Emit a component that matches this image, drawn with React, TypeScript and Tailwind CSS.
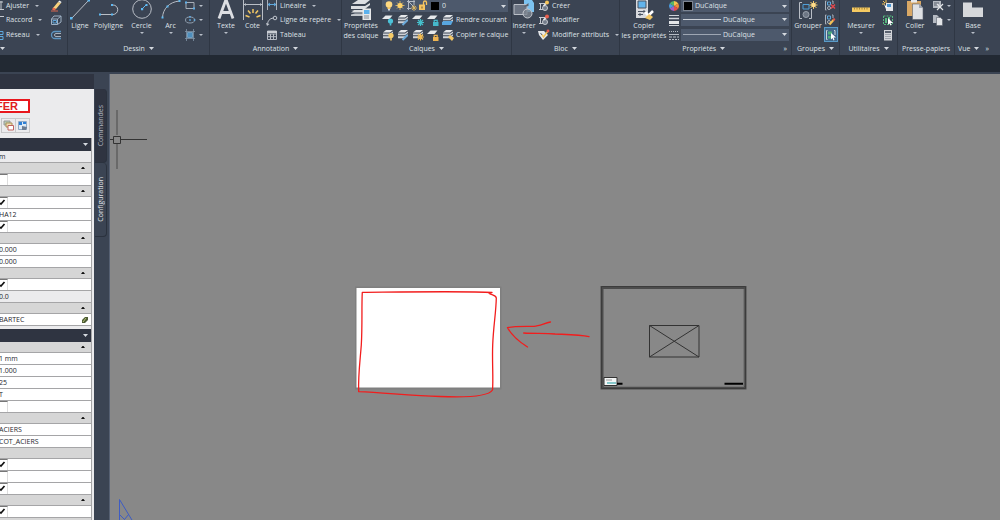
import type { ReactNode } from 'react';
import clsx from 'clsx';

type IconProps = { children: ReactNode; w?: number; h?: number };

function Icon({ children, w = 12, h = 12 }: IconProps) {
  return (
    <svg width={w} height={h} viewBox={`0 0 ${w} ${h}`} fill="none" className="shrink-0" aria-hidden="true">
      {children}
    </svg>
  );
}

function Caret({ big = false }: { big?: boolean }) {
  return big ? (
    <Icon w={5} h={3}>
      <path d="M0 0h5L2.500 3z" fill="#d5d9df" />
    </Icon>
  ) : (
    <Icon w={4} h={2}>
      <path d="M0 0h4L2 2z" fill="#b9bfc9" />
    </Icon>
  );
}

/* ---------- layer icons ---------- */

function Sheets() {
  return (
    <>
      <path d="M1 3.500L4 1h7L8 3.500z" fill="#e6e8eb" />
      <path d="M1 4.500h7l3-2v1.500L8 6.200H1zM1 7.200h7l3-2v1.500L8 9.200H1z" fill="#cfd2d7" />
    </>
  );
}

function LayerOne({ color }: { color: string }) {
  return (
    <Icon>
      <path d="M0 5l3.500-3.500h7L7.500 5z" fill="#e6e8eb" />
      <circle cx="8.500" cy="7" r="2.600" fill={color} />
      <path d="M7.700 9.200h1.600V11.500H7.700z" fill={color} />
    </Icon>
  );
}

function LayerFreeze() {
  return (
    <Icon>
      <path d="M0 5l3.500-3.500h7L7.500 5z" fill="#e6e8eb" />
      <path d="M8.500 5v7M5 8.500h7M6 6l5 5M11 6l-5 5" stroke="#45c0cc" strokeWidth="1.200" />
    </Icon>
  );
}

function LayerLock({ color }: { color: string }) {
  return (
    <Icon>
      <path d="M0 5l3.500-3.500h7L7.500 5z" fill="#e6e8eb" />
      <path d="M6 8h5.500v4H6z" fill={color} />
      <path d="M7.200 8V6.300h3V8" stroke={color} strokeWidth="1.200" />
    </Icon>
  );
}

function LayerStack({ color, shape }: { color: string; shape: 'bulb' | 'sun' | 'pen' }) {
  return (
    <Icon>
      <Sheets />
      {shape === 'bulb' && (
        <>
          <circle cx="9" cy="6.500" r="2.600" fill={color} />
          <path d="M8.200 8.500h1.600V11.500H8.200z" fill={color} />
        </>
      )}
      {shape === 'sun' && (
        <path d="M8.500 4.500v7M5 8h7M6 5.500l5 5M11 5.500l-5 5" stroke={color} strokeWidth="1.100" />
      )}
      {shape === 'pen' && <path d="M5.500 11l5-5" stroke={color} strokeWidth="2" />}
    </Icon>
  );
}

function Bulb() {
  return (
    <Icon w={10}>
      <circle cx="5" cy="4.500" r="3.300" fill="#ffd980" />
      <path d="M3.500 7h3v2h-3z" fill="#f2c766" />
      <path d="M4 9h2v1.500H4z" fill="#d6d9de" />
    </Icon>
  );
}

function Sun() {
  return (
    <Icon w={10}>
      <path d="M5 1v9M.5 5.500h9M2 2.500l6 6M8 2.500l-6 6" stroke="#f0c566" strokeWidth=".8" />
      <circle cx="5" cy="5.500" r="2.600" fill="#ffd36b" />
    </Icon>
  );
}

function ViewportFreeze() {
  return (
    <Icon w={11}>
      <path d="M1 1.500h8M2.500 0v10M1 8.500h4M8 0v5M3 2l5 5" stroke="#b5bac3" />
      <path d="M8 5v6M5 8h6M6 6l4 4M10 6l-4 4" stroke="#e9bd5f" strokeWidth=".8" />
    </Icon>
  );
}

function OpenLock() {
  return (
    <Icon w={10}>
      <path d="M1 4.500h6V10H1z" fill="#f6c560" />
      <path d="M5.500 5V2.500a1.500 1.500 0 0 1 3 0V5" stroke="#f6c560" strokeWidth="1.300" />
      <path d="M3.500 6.500h1v2h-1z" fill="#6b5a33" />
    </Icon>
  );
}

/* ---------- small tool icons ---------- */

const Eraser = () => (
  <Icon>
    <path d="M3 8l5-6 3 1-5 6z" fill="#f8d27c" />
    <path d="M8 2l1.500-1.500L11.500 2 11 3z" fill="#f4f4f4" />
    <path d="M3 7.500L6 9l-1.500 1.500L2 9.500z" fill="#f0694a" />
    <path d="M1 11h7" stroke="#d9664e" />
  </Icon>
);

const Cube = () => (
  <Icon>
    <path d="M1.500 5v5.500h6V5zM1.500 5l2.500-3h7L7.500 5M11 2v6l-3.500 2.500" stroke="#9fb1c4" />
    <path d="M3 6.500h3.500V9H3z" stroke="#5ea3d6" />
  </Icon>
);

const Offset = () => (
  <Icon>
    <path d="M11 2.500H5a3.500 3.500 0 0 0 0 7h6" stroke="#5c94c0" strokeWidth="1.300" />
    <path d="M11 4.500H6a1.500 1.500 0 0 0 0 3h5" stroke="#aab1bb" />
  </Icon>
);

const Rectangle = () => (
  <Icon>
    <path d="M2 2.500h8v6H2z" stroke="#a7aeb8" />
    <path d="M1 1.500h2v2H1zM9 7.500h2v2H9z" fill="#5fb0ea" />
  </Icon>
);

const Ellipse = () => (
  <Icon>
    <ellipse cx="6" cy="6" rx="4.500" ry="3" stroke="#8e9cac" />
    <path d="M5.200 5.200h1.600v1.600H5.200zM5.200 2h1.600v1.600H5.200zM9.800 5.200h1.600v1.600H9.800z" fill="#5fb0ea" />
  </Icon>
);

const Hatch = () => (
  <Icon>
    <path d="M2.500 0v12M9.500 0v12M1 2.500h10M1 9.500h10" stroke="#8294a7" strokeWidth=".8" />
    <path d="M3.500 3.500h5v5h-5z" fill="#4f8fbd" stroke="#8fc3e8" strokeWidth=".6" />
  </Icon>
);

const Linear = () => (
  <Icon>
    <path d="M1.500 0v10M10.500 0v10" stroke="#aab1bb" />
    <path d="M2 4.500h8M4 3L2 4.500 4 6M8 3l2 1.500L8 6" stroke="#5fa8dd" />
  </Icon>
);

const Leader = () => (
  <Icon>
    <path d="M1.500 11c0-4 2-6.500 6-7" stroke="#c1c6ce" />
    <circle cx="9" cy="4" r="1.800" stroke="#c1c6ce" />
    <path d="M0 9l1 3 2.500-2z" fill="#c1c6ce" />
  </Icon>
);

const TableIcon = () => (
  <Icon>
    <path d="M1.500 2h9v8.500h-9zM1.500 5h9M4.500 5v5.500M7.500 5v5.500M1.500 7.700h9" stroke="#b6bbc4" />
    <path d="M1 2h10v2H1z" fill="#c9cdd3" />
  </Icon>
);

const BlockEdit = ({ tip }: { tip: string }) => (
  <Icon>
    <path d="M1 3.500h6M2.500 3v6M1 9.500h4" stroke="#c5c9d0" />
    <circle cx="7" cy="8" r="2.500" fill="#747d8b" stroke="#c5c9d0" />
    <path d="M5.500 6L9 2.500" stroke="#e8e8e8" strokeWidth="1.600" />
    <circle cx="9" cy="2.500" r="2" fill={tip} />
  </Icon>
);

const AttrEdit = () => (
  <Icon>
    <path d="M0 2h6l4 4-5 5-4-5z" fill="#e4e6e9" />
    <path d="M4 5.500l1.500 2.500L10 2" stroke="#f3c154" strokeWidth="1.400" />
    <circle cx="10" cy="2" r="1.400" fill="#e5584c" />
    <path d="M2.500 4l1.500 2" stroke="#59606c" />
  </Icon>
);

const ColorWheel = () => (
  <Icon>
    <path d="M6 6V1a5 5 0 0 1 4.300 2.500z" fill="#f3c44f" />
    <path d="M6 6l4.300-2.500a5 5 0 0 1 0 5z" fill="#ef8b3a" />
    <path d="M6 6l4.300 2.500A5 5 0 0 1 6 11z" fill="#e2504d" />
    <path d="M6 6v5a5 5 0 0 1-4.300-2.500z" fill="#a25fc4" />
    <path d="M6 6L1.700 8.500a5 5 0 0 1 0-5z" fill="#4a9be0" />
    <path d="M6 6L1.700 3.500A5 5 0 0 1 6 1z" fill="#57b568" />
  </Icon>
);

const LineWeights = () => (
  <Icon>
    <path d="M1 1.500h10" stroke="#cfd3d9" />
    <path d="M1 4.500h10" stroke="#cfd3d9" strokeWidth="1.500" />
    <path d="M1 8.500h10" stroke="#e3e5e8" strokeWidth="3" />
    <path d="M1 11.500h10" stroke="#cfd3d9" />
  </Icon>
);

const LineTypes = () => (
  <Icon>
    <path d="M1 2.500h10" stroke="#b7bcc5" strokeDasharray="1 1" />
    <path d="M1 5.500h10" stroke="#b7bcc5" />
    <path d="M1 8h10" stroke="#b7bcc5" strokeDasharray="3 1" />
    <path d="M1 10.500h10" stroke="#b7bcc5" strokeDasharray="2 1" />
  </Icon>
);

const Ungroup = () => (
  <Icon>
    <path d="M2.500 1h-1v9h1M8 1h1v3" stroke="#aab1bb" />
    <path d="M3.500 2h3v3h-3z" stroke="#5fa8dd" />
    <circle cx="5" cy="8" r="1.500" stroke="#aab1bb" />
    <path d="M7 4.500l4 4M11 4.500l-4 4" stroke="#e5484d" strokeWidth="1.400" />
  </Icon>
);

const GroupEdit = () => (
  <Icon>
    <path d="M2.500 1h-1v9h1M8 1h1v3" stroke="#aab1bb" />
    <path d="M3.500 2h3v3h-3z" stroke="#5fa8dd" />
    <circle cx="5" cy="8" r="1.500" stroke="#aab1bb" />
    <path d="M5.500 10.500l4-4.500" stroke="#f3c154" strokeWidth="2" />
    <circle cx="10" cy="5.500" r="1.200" fill="#e5584c" />
  </Icon>
);

const GroupSelect = () => (
  <Icon>
    <path d="M2.500 1.500h-1v9h1M9 1.500h1V6" stroke="#cdd3db" />
    <path d="M3 2.500h4v3H3zM3 7h3v2.500H3z" fill="#4fae7c" />
    <path d="M6 4l5 4.500H8.500l1 2.500-1 .5-1-2.500L6 10.500z" fill="#fff" />
  </Icon>
);

const QuickSelect = () => (
  <Icon>
    <path d="M4 3h7v8H4z" fill="#e3e5e8" />
    <path d="M5 4h4v3H5z" fill="#4a94d0" />
    <path d="M1 1l2 2M4 0v3M0 4h3" stroke="#f3c154" />
    <path d="M2 4l4 4H4l.5 2.500z" fill="#fff" />
  </Icon>
);

const SelectAll = () => (
  <Icon>
    <path d="M1.500 2h9v8.500h-9z" stroke="#58b980" strokeDasharray="2 1" />
    <path d="M3 4h2v5H3zM6 3h2v3H6z" fill="#58b980" />
    <path d="M6 4l5 5H8.500l1 2-1 .5-1-2L6 10.500z" fill="#fff" />
  </Icon>
);

const Calculator = () => (
  <Icon>
    <path d="M2 1h8v10.500H2z" fill="#d3d5d9" />
    <path d="M3 2h6v2H3z" fill="#5b6370" />
    <path d="M3.500 5.500h5M3.500 7.500h5M3.500 9.500h5" stroke="#6b7280" strokeDasharray="1 1" />
  </Icon>
);

const Cut = () => (
  <Icon>
    <path d="M1 1h8v7H1z" fill="#b5bac2" />
    <path d="M2 3h5M2 5h4" stroke="#59606c" />
    <path d="M5 4l6 6M11 4l-6 6" stroke="#e3e5e8" strokeWidth="1.200" />
  </Icon>
);

const Copy = () => (
  <Icon>
    <path d="M1 1h4l2 2v6H1z" fill="#b5bac2" />
    <path d="M4.500 3.500h4l2 2v6h-6z" fill="#e3e5e8" stroke="#59606c" strokeWidth=".6" />
  </Icon>
);

/* ---------- large tool icons ---------- */

const LineIcon = () => (
  <Icon w={20} h={20}>
    <path d="M1.500 18.500L18.500.5" stroke="#b9bec6" />
    <path d="M0 17h2.500v2.500H0zM17.500 0H20v1.500h-2.500z" fill="#5fb9f2" />
  </Icon>
);

const PolylineIcon = () => (
  <Icon w={20} h={20}>
    <path d="M1 14.500h13a4.500 4.500 0 0 0 0-9.500h-2" stroke="#b9bec6" />
    <path d="M0 13.500h2v2H0zM12 13.500h2v2h-2zM12 4h2v2h-2z" fill="#5fb9f2" />
  </Icon>
);

const CircleIcon = () => (
  <Icon w={20} h={20}>
    <circle cx="10" cy="9" r="9.300" stroke="#b9bec6" />
    <path d="M10 9l4-4" stroke="#5fb9f2" />
    <path d="M9 8h2.200v2.200H9zM13.500 4h2v2h-2z" fill="#5fb9f2" />
  </Icon>
);

const ArcIcon = () => (
  <Icon w={20} h={20}>
    <path d="M1.500 17.500C2 9 8 2 18.500 1" stroke="#b9bec6" />
    <path d="M.5 16.500h2v2h-2zM5.500 5.500h2v2h-2zM17.500 0h2v2h-2z" fill="#5fb9f2" />
  </Icon>
);

const TextIcon = () => (
  <Icon w={18} h={20}>
    <path d="M2 18.500L8.300 1.500h1.400L16 18.500M4.500 12.500h9" stroke="#dcdee2" strokeWidth="2.800" />
  </Icon>
);

const DimIcon = () => (
  <Icon w={20} h={20}>
    <path d="M.5 0v20M19.500 0v20M1 4.500h18" stroke="#b9bec6" />
    <path d="M1 4.500L3 3v3zM19 4.500L17 3v3z" fill="#b9bec6" />
    <path d="M10 9v4M5 10.500l2.500 3M15 10.500l-2.500 3M2.500 15.500l4 1.500M17.500 15.500l-4 1.500" stroke="#f3c864" strokeWidth="1.500" />
  </Icon>
);

const LayerPropsIcon = () => (
  <Icon w={22} h={20}>
    <path d="M2 4l6-4h12l-5 4zM1 6h14l5-3v2l-5 4H1zM1 10h12v2.500H1l3-2z" fill="#dcdee2" />
    <path d="M1 14.500l4-1h8v2.500H1z" fill="#c3c7cd" />
    <path d="M12.500 8.500H21V20h-8.500z" fill="#e6e8ea" />
    <path d="M14 10h5.500v4H14z" fill="#5bb1ee" />
    <path d="M14 16h5M14 18h5" stroke="#858c97" />
  </Icon>
);

const InsertIcon = () => (
  <Icon w={22} h={20}>
    <path d="M11 0h8l2 3v9H11z" fill="#7cc3f1" />
    <path d="M1 4.500h13v10H1z" fill="#6d7583" stroke="#b9bec6" />
    <circle cx="14.500" cy="13.500" r="4.500" fill="#7c8490" fillOpacity=".8" stroke="#c5c9d0" />
    <path d="M10.500 7l5-4v3" fill="#59606c" />
  </Icon>
);

const MatchIcon = () => (
  <Icon w={20} h={20}>
    <path d="M2 0h12v18H2z" fill="#d8dade" />
    <path d="M4 1h8v7H4z" fill="#62b4ec" stroke="#4b5462" />
    <path d="M4 11.500h8M4 14.500h5M10 10v3M6 13v3" stroke="#4b5462" />
    <path d="M11 12l4 4M19 11l-4 4" stroke="#fff" strokeWidth="2.500" />
    <path d="M11 18l4-4 4 3-3 3z" fill="#f2c766" />
  </Icon>
);

const GroupIcon = () => (
  <Icon w={20} h={20}>
    <path d="M4 2.500H1.500v16H4M11 18.500h2.500V9" stroke="#b9bec6" />
    <path d="M5 4.500h6v4.500H5z" stroke="#4f9fd8" />
    <circle cx="8" cy="14.500" r="3" fill="#6d7684" stroke="#9aa1ac" />
    <path d="M15.500 1v8M11.500 5h8M12.500 2l6 6M18.500 2l-6 6" stroke="#f3c864" />
    <circle cx="15.500" cy="5" r="2.300" fill="#ffdc8a" />
  </Icon>
);

const RulerIcon = () => (
  <Icon w={20} h={20}>
    <path d="M1 7.500h18v4.500H1z" fill="#f5ca62" />
    <path d="M3.500 7.500v2M6 7.500v2M8.500 7.500v2M11 7.500v2M13.500 7.500v2M16 7.500v2" stroke="#8a6f2c" strokeWidth=".7" />
  </Icon>
);

const PasteIcon = () => (
  <Icon w={18} h={20}>
    <path d="M1 1h14v15H1z" fill="#d9a865" />
    <path d="M5 0h6v2.500H5z" fill="#e6e8ea" />
    <path d="M6.500 4h7l3.500 4v11.500H6.500z" fill="#dfe1e4" stroke="#59606c" strokeWidth=".6" />
    <path d="M13 4v4h4z" fill="#9fa5af" />
  </Icon>
);

const BaseIcon = () => (
  <Icon w={22} h={20}>
    <path d="M1 2.500h9V7.500h11V17H1z" fill="#d6d8db" />
  </Icon>
);

/* ---------- ribbon pieces ---------- */

type PanelProps = { title?: string; width: string; children: ReactNode; caret?: boolean; more?: boolean };

function Panel({ title, width, children, caret = true, more = false }: PanelProps) {
  return (
    <section className={clsx('flex flex-col border-r border-[#2f3744]', width)}>
      <div className="flex h-[42px]">{children}</div>
      <div className="flex h-[13px] items-center px-1">
        <button className="mx-auto flex items-center gap-1 whitespace-nowrap">
          {title}
          {caret && <Caret big />}
        </button>
        {more && <button aria-label="Plus">»</button>}
      </div>
    </section>
  );
}

type BigButtonProps = { icon: ReactNode; label: string; second?: string; width: string; caret?: boolean };

function BigButton({ icon, label, second, width, caret = false }: BigButtonProps) {
  return (
    <button className={clsx('flex shrink-0 flex-col items-center whitespace-nowrap', width)}>
      {icon}
      <span className="flex h-3 items-center leading-3">{label}</span>
      {second && <span className="leading-2">{second}</span>}
      {caret && <Caret />}
    </button>
  );
}

function Rows({ children, className }: { children: ReactNode; className?: string }) {
  return <div className={clsx('grid grid-rows-[12px_15px_15px]', className)}>{children}</div>;
}

function Tool({ icon, label, caret = false, name }: { icon?: ReactNode; label?: string; caret?: boolean; name?: string }) {
  return (
    <button aria-label={label ? undefined : name} className="flex items-center gap-0.5 whitespace-nowrap">
      {icon}
      {label}
      {caret && (
        <span className={label ? 'pl-1' : 'pl-px'}>
          <Caret />
        </span>
      )}
    </button>
  );
}

function Combo({ name, value, children }: { name: string; value: string; children?: ReactNode }) {
  return (
    <div className="flex h-3 min-w-0 flex-1 items-center gap-0.5 bg-[#4d596c] pr-0.5 pl-0.5">
      {children}
      <select aria-label={name} className="min-w-0 flex-1 appearance-none bg-transparent leading-3 outline-none">
        <option>{value}</option>
      </select>
      <Caret big />
    </div>
  );
}

function Ribbon() {
  return (
    <header className="flex h-[55px] shrink-0 overflow-hidden bg-[#3b4453] text-[7px] leading-3 text-[#dfe2e7]">
      <section className="flex w-[68px] shrink-0 flex-col border-r border-[#2f3744]">
        <div className="flex h-[42px] justify-between pr-[5px]">
          <Rows>
            <Tool icon={<Icon w={4}><path d="M0 9.500h4M1 1v8M0 2h3" stroke="#c5c9d0" /></Icon>} label="Ajuster" caret />
            <Tool icon={<Icon w={4}><path d="M0 2.500h4" stroke="#c5c9d0" /></Icon>} label="Raccord" caret />
            <Tool icon={<Icon w={4}><path d="M0 2.500h3v3H0M0 7.500h3v3H0" stroke="#5fa8dd" /></Icon>} label="Réseau" caret />
          </Rows>
          <Rows>
            <Tool icon={<Eraser />} name="Effacer" />
            <Tool icon={<Cube />} name="Décomposer" />
            <Tool icon={<Offset />} name="Décaler" />
          </Rows>
        </div>
        <button aria-label="Modification" className="flex h-[13px] items-center">
          <Caret big />
        </button>
      </section>

      <Panel title="Dessin" width="w-[142px] shrink-0">
        <BigButton icon={<LineIcon />} label="Ligne" width="w-6" />
        <BigButton icon={<PolylineIcon />} label="Polyligne" width="w-[33px]" />
        <BigButton icon={<CircleIcon />} label="Cercle" width="w-[33px]" caret />
        <BigButton icon={<ArcIcon />} label="Arc" width="w-[25px]" caret />
        <Rows className="pl-px">
          <Tool icon={<Rectangle />} name="Rectangle" caret />
          <Tool icon={<Ellipse />} name="Ellipse" caret />
          <Tool icon={<Hatch />} name="Hachures" caret />
        </Rows>
      </Panel>

      <Panel title="Annotation" width="w-[132px] shrink-0">
        <BigButton icon={<TextIcon />} label="Texte" width="w-8" caret />
        <BigButton icon={<DimIcon />} label="Cote" width="w-[21px]" />
        <Rows className="pl-[3px]">
          <Tool icon={<Linear />} label="Linéaire" caret />
          <Tool icon={<Leader />} label="Ligne de repère" caret />
          <Tool icon={<TableIcon />} label="Tableau" />
        </Rows>
      </Panel>

      <Panel title="Calques" width="w-[170px] shrink-0">
        <BigButton icon={<LayerPropsIcon />} label="Propriétés" second="des calque" width="w-[38px]" />
        <Rows className="flex-1 pr-1 pl-0.5">
          <div className="flex">
            <Combo name="Calque" value="0">
              <span className="flex gap-px">
                <Bulb />
                <Sun />
                <ViewportFreeze />
                <OpenLock />
              </span>
              <span className="mx-px size-2 bg-black" />
            </Combo>
          </div>
          <div className="flex gap-[3px]">
            <Tool icon={<LayerOne color="#4cc3d9" />} name="Désactiver" />
            <Tool icon={<LayerStack color="#6aa9da" shape="pen" />} name="Isoler" />
            <Tool icon={<LayerFreeze />} name="Geler" />
            <Tool icon={<LayerLock color="#45b8cc" />} name="Verrouiller" />
            <Tool icon={<Icon><Sheets /><path d="M0 8l2-1h9l-2 4H0z" fill="#58a6e0" /></Icon>} label="Rendre courant" />
          </div>
          <div className="flex gap-[3px]">
            <Tool icon={<LayerStack color="#f7cb67" shape="bulb" />} name="Activer tous" />
            <Tool icon={<LayerStack color="#6aa9da" shape="pen" />} name="Ne plus isoler" />
            <Tool icon={<LayerStack color="#f0b94e" shape="sun" />} name="Dégeler" />
            <Tool icon={<LayerLock color="#eeb452" />} name="Déverrouiller" />
            <Tool icon={<Icon><Sheets /><path d="M6 8l2-2 4 3-2 3z" fill="#f3c766" /></Icon>} label="Copier le calque" />
          </div>
        </Rows>
      </Panel>

      <Panel title="Bloc" width="w-[108px] shrink-0">
        <BigButton icon={<InsertIcon />} label="Insérer" width="w-6" caret />
        <Rows className="pl-0.5">
          <Tool icon={<BlockEdit tip="#f6c45a" />} label="Créer" />
          <Tool icon={<BlockEdit tip="#e8604f" />} label="Modifier" />
          <Tool icon={<AttrEdit />} label="Modifier attributs" caret />
        </Rows>
      </Panel>

      <Panel title="Propriétés" width="w-[172px] shrink-0" more>
        <BigButton icon={<MatchIcon />} label="Copier" second="les propriétés" width="w-12" />
        <Rows className="flex-1 pr-0.5">
          <div className="flex items-center gap-px">
            <ColorWheel />
            <Combo name="Couleur" value="DuCalque">
              <span className="size-[10px] border border-[#7d8592] bg-black" />
            </Combo>
          </div>
          <div className="flex items-center gap-px">
            <LineWeights />
            <Combo name="Epaisseur de ligne" value="DuCalque">
              <span className="h-px w-[38px] bg-[#cdd2d9]" />
            </Combo>
          </div>
          <div className="flex items-center gap-px">
            <LineTypes />
            <Combo name="Type de ligne" value="DuCalque">
              <span className="h-px w-[38px] bg-[#9ea6b3]" />
            </Combo>
          </div>
        </Rows>
      </Panel>

      <Panel title="Groupes" width="w-12 shrink-0">
        <BigButton icon={<GroupIcon />} label="Grouper" width="w-8" />
        <Rows>
          <Tool icon={<Ungroup />} name="Dissocier" />
          <Tool icon={<GroupEdit />} name="Modifier le groupe" />
          <button aria-label="Sélection de groupe" className="border border-[#5a9bc8] bg-[#41688a]">
            <GroupSelect />
          </button>
        </Rows>
      </Panel>

      <Panel title="Utilitaires" width="w-[58px] shrink-0">
        <BigButton icon={<RulerIcon />} label="Mesurer" width="w-[42px]" caret />
        <Rows>
          <Tool icon={<QuickSelect />} name="Sélection rapide" />
          <Tool icon={<SelectAll />} name="Tout sélectionner" />
          <Tool icon={<Calculator />} name="Calculatrice" />
        </Rows>
      </Panel>

      <Panel title="Presse-papiers" width="w-[57px] shrink-0" caret={false}>
        <BigButton icon={<PasteIcon />} label="Coller" width="w-[34px]" caret />
        <Rows>
          <Tool icon={<Cut />} name="Couper" caret />
          <Tool icon={<Copy />} name="Copier" caret />
        </Rows>
      </Panel>

      <section className="flex flex-1 flex-col">
        <div className="flex h-[42px]">
          <BigButton icon={<BaseIcon />} label="Base" width="w-9" caret />
        </div>
        <div className="flex h-[13px] items-center gap-[6px] pl-[3px]">
          <button className="flex items-center gap-1">
            Vue
            <Caret big />
          </button>
          <button aria-label="Plus">»</button>
        </div>
      </section>
    </header>
  );
}

/* ---------- property palette ---------- */

type Row =
  | { kind: 'section'; open?: boolean }
  | { kind: 'text'; value: string; muted?: boolean; action?: boolean }
  | { kind: 'check'; checked: boolean };

const section: Row = { kind: 'section', open: true };
const on: Row = { kind: 'check', checked: true };
const off: Row = { kind: 'check', checked: false };

const firstGroup: Row[] = [
  { kind: 'text', value: 'm', muted: true },
  section,
  off,
  section,
  on,
  { kind: 'text', value: 'HA12' },
  on,
  section,
  { kind: 'text', value: '0.000' },
  { kind: 'text', value: '0.000' },
  section,
  on,
  { kind: 'text', value: '0.0', muted: true },
  section,
  { kind: 'text', value: 'BARTEC', action: true },
];

const secondGroup: Row[] = [
  section,
  { kind: 'text', value: '1 mm' },
  { kind: 'text', value: '1.000' },
  { kind: 'text', value: '25' },
  { kind: 'text', value: 'T' },
  off,
  section,
  { kind: 'text', value: 'ACIERS' },
  { kind: 'text', value: 'COT_ACIERS' },
  { kind: 'section' },
  on,
  off,
  on,
  section,
  on,
  { kind: 'section' },
];

function PropertyRow({ row, index }: { row: Row; index: number }) {
  if (row.kind === 'section') {
    return (
      <button
        aria-label={`Section ${index}`}
        className="flex h-[11px] w-full shrink-0 items-center justify-end border-b border-[#a5a5a7] bg-[#d6d6d6] pr-[6px]"
      >
        {row.open && (
          <Icon w={4} h={2}>
            <path d="M0 2h4L2.500 0h-1z" fill="#111" />
          </Icon>
        )}
      </button>
    );
  }

  if (row.kind === 'check') {
    return (
      <label className="relative flex h-3 shrink-0 border-b border-[#a5a5a7] bg-white">
        <input
          type="checkbox"
          defaultChecked={row.checked}
          aria-label={`Option ${index}`}
          className="peer h-full w-2 appearance-none border-t border-r border-t-[#777] border-r-[#ddd]"
        />
        <svg width="6" height="8" viewBox="0 0 6 8" fill="none" className="absolute top-px left-0 hidden peer-checked:block">
          <path d="M0 5l1 1L4.500 2" stroke="#111" strokeWidth="1.700" />
        </svg>
      </label>
    );
  }

  return (
    <div
      className={clsx(
        'flex h-3 shrink-0 items-center border-b border-[#a5a5a7] pr-[3px]',
        row.muted ? 'bg-[#ebebed]' : 'bg-white'
      )}
    >
      <input
        defaultValue={row.value}
        aria-label={`Valeur ${index}`}
        className="-ml-px min-w-0 flex-1 bg-transparent leading-[11px] outline-none"
      />
      {row.action && (
        <Icon w={7} h={8}>
          <path d="M1 7V4l3-3h3v3L4 7z" fill="#4d5c34" />
          <path d="M2 6l3-4" stroke="#b6c47a" />
        </Icon>
      )}
    </div>
  );
}

function GroupHeader({ name }: { name: string }) {
  return (
    <button aria-label={name} className="flex h-[13px] w-full shrink-0 items-center justify-end bg-[#2f3441] pr-[3px]">
      <Caret big />
    </button>
  );
}

function Palette() {
  return (
    <aside className="flex w-[94px] shrink-0 flex-col overflow-hidden bg-[#ebebed] font-[Open_Sans,sans-serif] text-[7px] text-[#26262c]">
      <div className="h-[15px] shrink-0 bg-[#2f3441]" />
      <div className="flex h-[49px] shrink-0 flex-col items-start pt-[10px]">
        <div className="-ml-1 flex h-[14px] items-center border-2 border-l-0 border-[#e8161c] bg-white pr-[10px] font-[Liberation_Sans,Arial,sans-serif] text-[11px] leading-3 font-bold text-[#e02020]">
          FER
        </div>
        <div className="flex pt-[5px]">
          <span className="w-[2px] border-r border-[#c4c4c6]" />
          <button aria-label="Copier les calques" className="border border-l-0 border-[#c9c9cb] p-px">
            <Icon w={11} h={11}>
              <path d="M1 1h6v4H1z" fill="#b5cbb0" stroke="#999" />
              <path d="M3 3h6v4H3z" fill="#f1ddb0" stroke="#a98f5a" />
              <path d="M5 5.500h5.500v4.500H5z" fill="#fff" stroke="#c0625d" />
            </Icon>
          </button>
          <button aria-label="Paramètres" className="border border-l-0 border-[#c9c9cb] p-px">
            <Icon w={11} h={11}>
              <path d="M1.500 1.500h8v8h-8z" fill="#dce9f5" stroke="#8ea9c5" />
              <path d="M2 2h3v3H2zM6 2h3v2H6z" fill="#2c7fd6" />
              <path d="M5 6l5 1-1 3H5z" fill="#6b7c92" />
            </Icon>
          </button>
        </div>
      </div>
      <div className="flex w-[92px] flex-col border-r border-[#a5a5a7]">
        <GroupHeader name="Paramètres" />
        {firstGroup.map((row, i) => (
          <PropertyRow key={i} row={row} index={i + 1} />
        ))}
        <div className="h-[3px] shrink-0" />
        <GroupHeader name="Annotations" />
        {secondGroup.map((row, i) => (
          <PropertyRow key={i} row={row} index={i + 16} />
        ))}
      </div>
    </aside>
  );
}

function SideTabs() {
  const tab = 'flex h-[74px] w-3 items-center justify-center rounded-r-sm border-r border-b border-[#2b323e]';
  return (
    <nav className="w-4 shrink-0 border-r border-[#566072] bg-[#3b4453] pt-[15px] pl-px text-[7px] leading-3 text-[#e2e5ea]">
      <button className={clsx(tab, 'bg-[#2f3441] text-[#b4b9c2]')}>
        <span className="rotate-180 [writing-mode:vertical-rl]">Commandes</span>
      </button>
      <button className={tab}>
        <span className="rotate-180 [writing-mode:vertical-rl]">Configuration</span>
      </button>
    </nav>
  );
}

/* ---------- drawing area ---------- */

function Drawing() {
  return (
    <main className="min-w-0 flex-1 bg-[#888888]">
      <svg className="h-full w-full" viewBox="110 74 890 446" preserveAspectRatio="xMinYMin slice" fill="none">
        {/* cursor */}
        <path d="M117 110v25M117 144v25" stroke="#5f5f5f" strokeWidth="1.500" />
        <path d="M110 139.500h3.500M121 139.500h26" stroke="#333" />
        <path d="M113.500 136.500h7v7h-7z" stroke="#333" />

        {/* empty sheet */}
        <path d="M355 286.500h146.500v103H355z" fill="#7f7f7f" />
        <path d="M356.500 288H500v99.500H356.500z" fill="#fff" />

        {/* framed sheet */}
        <path d="M602 287.500h143v100.500H602z" stroke="#4c4c4c" strokeWidth="3" />
        <path d="M601.500 286.500h144v102h-144z" stroke="#3c3c3c" />
        <path d="M743.800 289v97M604 386.300h140" stroke="#828282" strokeWidth=".8" />
        <path d="M649.500 325.500h49.500v31.500h-49.500zM649.500 325.500l49.500 31.500M699 325.500L649.500 357" stroke="#333" />
        <path d="M604 377.500h13v8h-13z" fill="#f4f6f6" stroke="#333" />
        <path d="M607 383h9" stroke="#62b8bd" strokeWidth="1.500" />
        <path d="M606 380h6" stroke="#999" />
        <path d="M617 383.800h5.500M724.500 383.800H743" stroke="#000" strokeWidth="2" />

        {/* red markup */}
        <g stroke="#f21d1d" strokeWidth="1.300" strokeLinecap="round" strokeLinejoin="round">
          <path d="M492 292.500C470 291 400 292 362.300 292.300C361.500 306 362.500 325 361.300 345C360 362 358 376 358.700 391.700C385 392.500 410 396 440 396.500C464 397.500 488 397 492.500 390C493.500 380 492 360 492.700 345C493.500 325 496 313 496.300 298C496 294.500 491 295.500 488.500 292.700" />
          <path d="M550.500 322C544 323.500 539 326 534 326.300C525 326.500 514 326 507.500 327.700C511 334 518 341 527.500 347" />
          <path d="M523.700 333C535 333.800 545 332.800 555 334C567 334.500 580 334.500 589 336.700" />
        </g>

        {/* axis marker */}
        <path d="M119.500 530V499.500L138 530M119.500 514.500l5 5 4-5M124.500 519.500V530" stroke="#3d5cc4" />
      </svg>
    </main>
  );
}

export default function App() {
  return (
    <div className="flex h-screen flex-col overflow-hidden bg-[#3b4453] font-[Open_Sans,Noto_Sans,sans-serif]">
      <Ribbon />
      <div className="h-[17px] shrink-0 bg-[#222933]" />
      <div className="flex min-h-0 flex-1 pt-[2px]">
        <Palette />
        <SideTabs />
        <Drawing />
      </div>
    </div>
  );
}
